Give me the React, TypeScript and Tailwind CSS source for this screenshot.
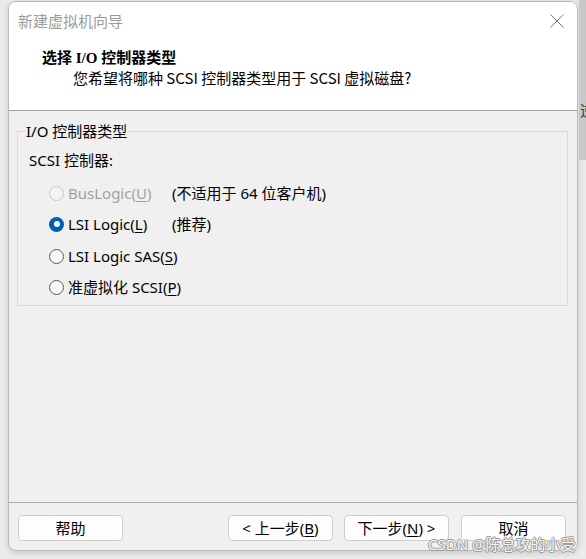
import type { ReactNode } from 'react';

const ui = "font-['Noto_Sans','Noto_Sans_CJK_SC',sans-serif]";

type RadioState = 'checked' | 'unchecked' | 'disabled';

const Radio = ({ state }: { state: RadioState }) => {
	if (state === 'checked') {
		return (
			<span className="flex h-[15px] w-[15px] shrink-0 items-center justify-center rounded-full bg-[#005fb8]">
				<span className="h-[6px] w-[6px] rounded-full bg-white" />
			</span>
		);
	}
	return (
		<span
			className={
				state === 'disabled'
					? 'h-[15px] w-[15px] shrink-0 rounded-full border border-[#c6c6c6] bg-[#f3f3f3]'
					: 'h-[15px] w-[15px] shrink-0 rounded-full border border-[#5b5b5b] bg-[#f7f7f7]'
			}
		/>
	);
};

const Key = ({ children }: { children: ReactNode }) => (
	<span className="underline decoration-1 underline-offset-[2px]">{children}</span>
);

const Option = ({
	state,
	label,
	note,
	className,
}: {
	state: RadioState;
	label: ReactNode;
	note?: string;
	className: string;
}) => (
	<div className={`flex h-[20px] items-center ${className}`}>
		<div className="flex w-[123px] shrink-0 items-center gap-[4px]">
			<Radio state={state} />
			<span className={state === 'disabled' ? 'whitespace-nowrap text-[#a2a2a2]' : 'whitespace-nowrap text-black'}>
				{label}
			</span>
		</div>
		{note && <span className="whitespace-nowrap text-black">{note}</span>}
	</div>
);

const WizButton = ({ children, className = '' }: { children: ReactNode; className?: string }) => (
	<button
		type="button"
		className={`flex h-[26px] w-[105px] items-center justify-center rounded-[4px] border border-[#cfcfcf] bg-[#fdfdfd] text-[15px] leading-none text-black ${className}`}
	>
		{children}
	</button>
);

export default function App() {
	return (
		<div className={`relative h-[559px] w-[586px] overflow-hidden bg-[#ebebeb] ${ui}`}>
			<div className="flex">
				{/* wizard window */}
				<div className="ml-[8px] mt-[1px] flex h-[550px] w-[570px] flex-col overflow-hidden rounded-[8px] border border-[#b9b9b9] bg-[#f0f0f0] shadow-[0_2px_6px_rgba(0,0,0,0.15)]">
					{/* header */}
					<div className="h-[109px] shrink-0 border-b border-[#a0a0a0] bg-white">
						<div className="flex h-[38px] items-center justify-between pl-[9px] pr-[13px] pt-[1px]">
							<span className="text-[15px] leading-none text-[#9b9b9b]">新建虚拟机向导</span>
							<svg width="14" height="14" viewBox="0 0 14 14" className="mb-[2px]">
								<path d="M0.5 0.5 L13.5 13.5 M13.5 0.5 L0.5 13.5" stroke="#7b7b7b" strokeWidth="1" fill="none" />
							</svg>
						</div>
						<div className="mt-[8px] pl-[33px] font-['Liberation_Serif','Noto_Sans_CJK_SC',serif] text-[15px] font-bold leading-[20px] text-black">
							选择 I/O 控制器类型
						</div>
						<div className="pl-[64px] font-['Noto_Sans_CJK_SC',sans-serif] text-[15px] leading-[20px] text-black">
							您希望将哪种 SCSI 控制器类型用于 SCSI 虚拟磁盘?
						</div>
					</div>

					{/* body */}
					<div className="flex-1 pl-[8px] pr-[9px] pt-[10px] text-[15px]">
						<fieldset className="border border-[#d9d9d9] pb-[8px] pl-[31px]">
							<legend className="ml-[-24px] px-[1px] leading-[20px] text-black">I/O 控制器类型</legend>
							<div className="-ml-[20px] mt-[9px] h-[20px] leading-[20px] text-black">SCSI 控制器:</div>
							<Option
								className="mt-[13px]"
								state="disabled"
								label={
									<>
										BusLogic(<Key>U</Key>)
									</>
								}
								note="(不适用于 64 位客户机)"
							/>
							<Option
								className="mt-[11px]"
								state="checked"
								label={
									<>
										LSI Logic(<Key>L</Key>)
									</>
								}
								note="(推荐)"
							/>
							<Option
								className="mt-[12px]"
								state="unchecked"
								label={
									<>
										LSI Logic SAS(<Key>S</Key>)
									</>
								}
							/>
							<Option
								className="mt-[11px]"
								state="unchecked"
								label={
									<>
										准虚拟化 SCSI(<Key>P</Key>)
									</>
								}
							/>
						</fieldset>
					</div>

					{/* footer */}
					<div className="flex h-[48px] shrink-0 items-start border-t border-[#a9a9a9] pl-[9px] pr-[11px] pt-[12px]">
						<WizButton>帮助</WizButton>
						<WizButton className="ml-auto">
							&lt; 上一步(<Key>B</Key>)
						</WizButton>
						<WizButton className="ml-[11px]">
							下一步(<Key>N</Key>) &gt;
						</WizButton>
						<WizButton className="ml-[12px]">取消</WizButton>
					</div>
				</div>

				{/* window behind, on the right */}
				<div className="ml-[1px] h-[160px] w-[7px] overflow-hidden bg-[#c8c8c8] pt-[103px]">
					<span className="block pl-[1px] text-[15px] leading-none text-[#3a3a3a]">逆</span>
				</div>
			</div>

			<span className="absolute left-[428px] top-[534px] whitespace-nowrap text-[15px] leading-[20px] text-[#f6f6f6] [text-shadow:1px_0_0_#9a9a9a,-1px_0_0_#9a9a9a,0_1px_0_#9a9a9a,0_-1px_0_#9a9a9a]">
				CSDN @陈总攻的小受
			</span>
		</div>
	);
}
